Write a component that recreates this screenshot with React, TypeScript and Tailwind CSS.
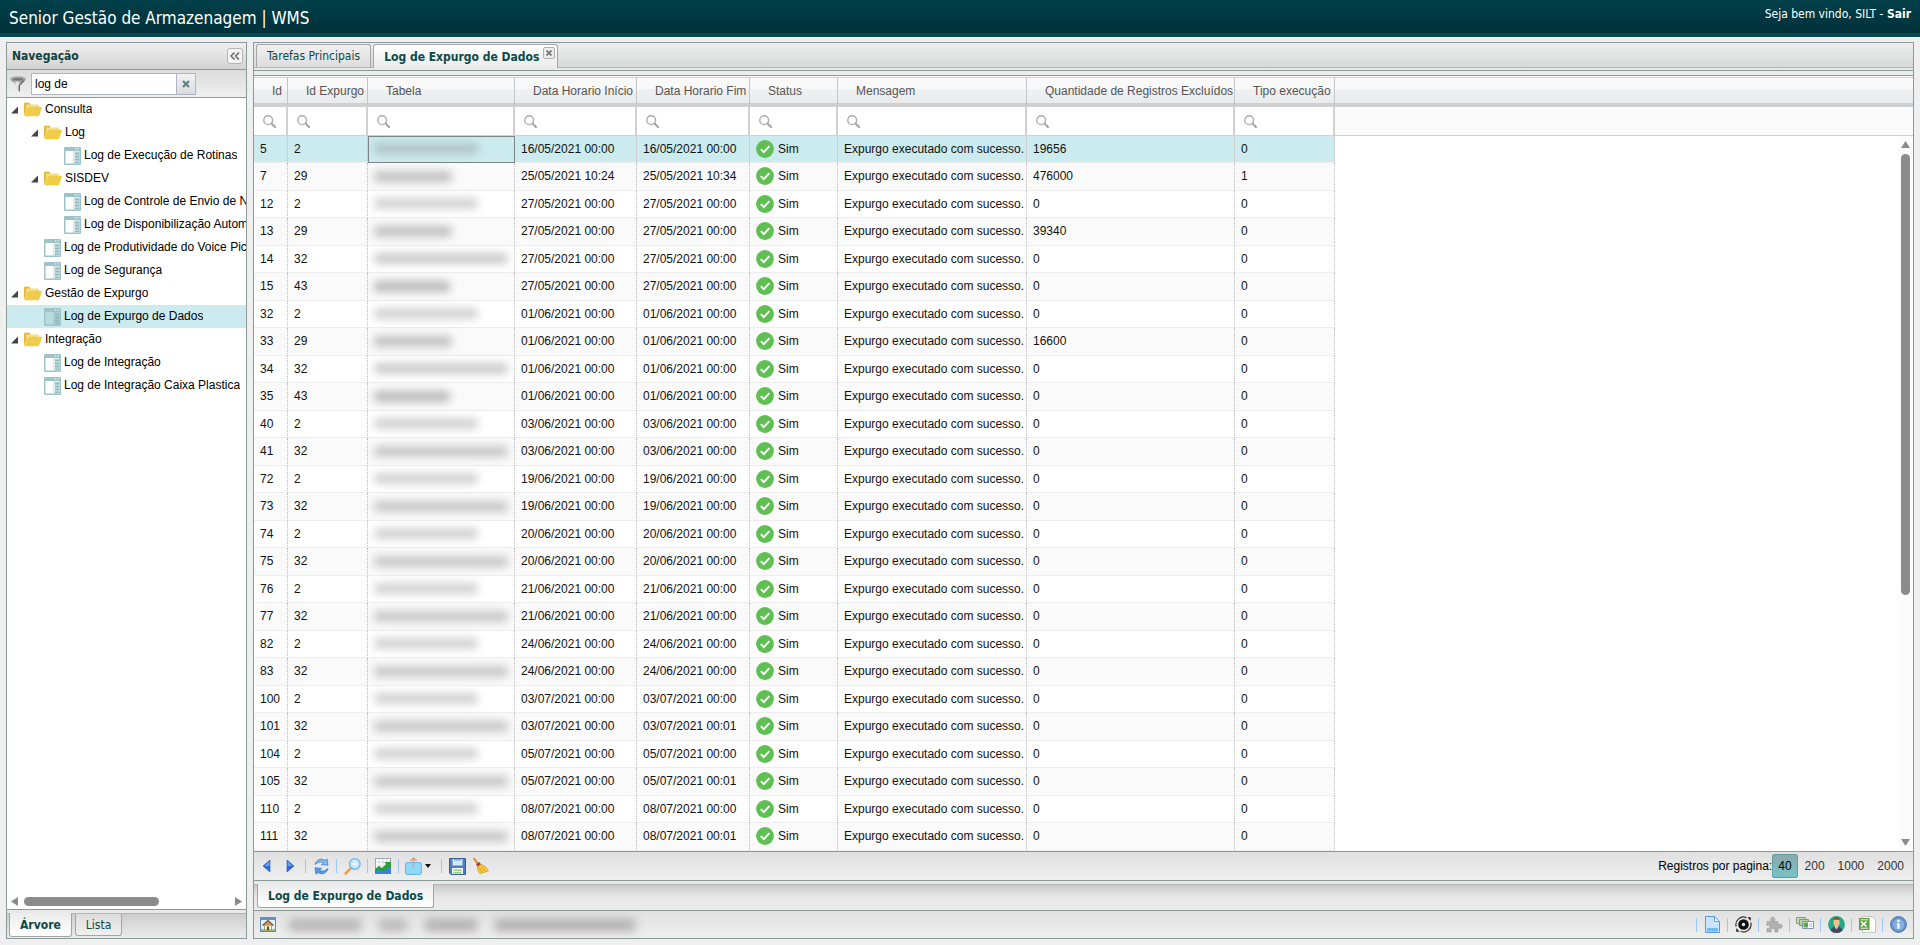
import { useState } from 'react';
import type { ReactNode } from 'react';

type TreeNode = { label: string; level: number; folder?: boolean };

const tree: TreeNode[] = [
  { label: 'Consulta', level: 0, folder: true },
  { label: 'Log', level: 1, folder: true },
  { label: 'Log de Execução de Rotinas', level: 2 },
  { label: 'SISDEV', level: 1, folder: true },
  { label: 'Log de Controle de Envio de Notas', level: 2 },
  { label: 'Log de Disponibilização Automática', level: 2 },
  { label: 'Log de Produtividade do Voice Picking', level: 1 },
  { label: 'Log de Segurança', level: 1 },
  { label: 'Gestão de Expurgo', level: 0, folder: true },
  { label: 'Log de Expurgo de Dados', level: 1 },
  { label: 'Integração', level: 0, folder: true },
  { label: 'Log de Integração', level: 1 },
  { label: 'Log de Integração Caixa Plastica', level: 1 },
];

const indent = ['pl-[3px]', 'pl-[23px]', 'pl-[43px]'];

const columns = [
  { label: 'Id', width: 'w-[34px]' },
  { label: 'Id Expurgo', width: 'w-[80px]' },
  { label: 'Tabela', width: 'w-[147px]' },
  { label: 'Data Horario Início', width: 'w-[122px]' },
  { label: 'Data Horario Fim', width: 'w-[113px]' },
  { label: 'Status', width: 'w-[88px]' },
  { label: 'Mensagem', width: 'w-[189px]' },
  { label: 'Quantidade de Registros Excluídos', width: 'w-[208px]' },
  { label: 'Tipo execução', width: 'w-[100px]' },
];

// id, id expurgo, início, fim, quantidade, tipo
const rows: [number, number, string, string, number, number][] = [
  [5, 2, '16/05/2021 00:00', '16/05/2021 00:00', 19656, 0],
  [7, 29, '25/05/2021 10:24', '25/05/2021 10:34', 476000, 1],
  [12, 2, '27/05/2021 00:00', '27/05/2021 00:00', 0, 0],
  [13, 29, '27/05/2021 00:00', '27/05/2021 00:00', 39340, 0],
  [14, 32, '27/05/2021 00:00', '27/05/2021 00:00', 0, 0],
  [15, 43, '27/05/2021 00:00', '27/05/2021 00:00', 0, 0],
  [32, 2, '01/06/2021 00:00', '01/06/2021 00:00', 0, 0],
  [33, 29, '01/06/2021 00:00', '01/06/2021 00:00', 16600, 0],
  [34, 32, '01/06/2021 00:00', '01/06/2021 00:00', 0, 0],
  [35, 43, '01/06/2021 00:00', '01/06/2021 00:00', 0, 0],
  [40, 2, '03/06/2021 00:00', '03/06/2021 00:00', 0, 0],
  [41, 32, '03/06/2021 00:00', '03/06/2021 00:00', 0, 0],
  [72, 2, '19/06/2021 00:00', '19/06/2021 00:00', 0, 0],
  [73, 32, '19/06/2021 00:00', '19/06/2021 00:00', 0, 0],
  [74, 2, '20/06/2021 00:00', '20/06/2021 00:00', 0, 0],
  [75, 32, '20/06/2021 00:00', '20/06/2021 00:00', 0, 0],
  [76, 2, '21/06/2021 00:00', '21/06/2021 00:00', 0, 0],
  [77, 32, '21/06/2021 00:00', '21/06/2021 00:00', 0, 0],
  [82, 2, '24/06/2021 00:00', '24/06/2021 00:00', 0, 0],
  [83, 32, '24/06/2021 00:00', '24/06/2021 00:00', 0, 0],
  [100, 2, '03/07/2021 00:00', '03/07/2021 00:00', 0, 0],
  [101, 32, '03/07/2021 00:00', '03/07/2021 00:01', 0, 0],
  [104, 2, '05/07/2021 00:00', '05/07/2021 00:00', 0, 0],
  [105, 32, '05/07/2021 00:00', '05/07/2021 00:01', 0, 0],
  [110, 2, '08/07/2021 00:00', '08/07/2021 00:00', 0, 0],
  [111, 32, '08/07/2021 00:00', '08/07/2021 00:01', 0, 0],
];

const pageSizes = [40, 200, 1000, 2000];

// Masked table names, one length per expurgo
const maskWidth: Record<number, string> = {
  2: 'w-[104px] bg-[#7d7d7d]/35',
  29: 'w-[78px] bg-[#6d6d6d]/40',
  32: 'w-[134px] bg-[#7d7d7d]/40',
  43: 'w-[76px] bg-[#6d6d6d]/45',
};

const FolderIcon = () => (
  <svg width="18" height="15" viewBox="0 0 18 15" className="shrink-0">
    <path d="M0 1.6Q0 .8 1 .8h4.4l1.4 1.6H14q.8 0 .8.8V6L4 12 0 13.6Z" fill="#f3df8c" />
    <path d="M0 1.6Q0 .8 1 .8h4.4l1.4 1.600H2.200V8L0 13.400Z" fill="#e5b93a" />
    <path d="M3.800 5.600q.3-.8 1.200-.8h12.300q.9 0 .6.900l-2.600 7.600q-.3.900-1.300.9H.6Z" fill="#f0cd48" />
  </svg>
);

const FormIcon = ({ faded }: { faded?: boolean }) => (
  <svg width="17" height="18" viewBox="0 0 17 18" className="shrink-0">
    <rect width="17" height="18" rx="1" fill="#9fc4c7" />
    <rect x="1.5" y="4" width="7.5" height="12.5" fill={faded ? '#b9dcdf' : '#fff'} />
    <rect x="9" y="4" width="6.5" height="12.5" fill={faded ? '#a9cfd2' : '#dcebec'} />
    <path d="M11 5.5h4v2h-4zM11 8.5h4v2h-4zM11 11.5h4v2h-4zM11 14.5h4v1.5h-4z" fill="#8fb9bd" />
    <path d="M11 1.2h1.2v1.3H11zM13.6 1.2h1.2v1.3h-1.2z" fill="#e6f3f4" />
  </svg>
);

const FunnelIcon = () => (
  <svg width="16" height="16" viewBox="0 0 16 16">
    <defs>
      <linearGradient id="funnel" x1="0" x2="1">
        <stop offset="0" stopColor="#6b6b6b" />
        <stop offset=".45" stopColor="#f2f2f2" />
        <stop offset="1" stopColor="#5a5a5a" />
      </linearGradient>
    </defs>
    <path d="M.6 3.2 6 9.4V14l4 1.6V9.4l5.4-6.2Z" fill="url(#funnel)" />
    <path d="M10 9.4v6.2L8.600 15V9.400l4-5h2.400Z" fill="#666" />
    <ellipse cx="8" cy="3" rx="7.5" ry="2.2" fill="#b4b4b4" stroke="#858585" strokeWidth=".6" />
    <ellipse cx="8" cy="3.3" rx="5.5" ry="1.2" fill="#777" />
  </svg>
);

const SearchIcon = () => (
  <svg width="13" height="13" viewBox="0 0 13 13" fill="none" className="shrink-0">
    <circle cx="5.2" cy="5.2" r="4.4" stroke="#acacac" strokeWidth="1.4" />
    <path d="m8.6 8.6 3.4 3.4" stroke="#a0a0a0" strokeWidth="2" strokeLinecap="round" />
  </svg>
);

const CheckIcon = () => (
  <svg width="18" height="18" viewBox="0 0 18 18" fill="none" className="shrink-0">
    <circle cx="9" cy="9" r="8.9" fill="#5fbf52" />
    <path d="m4.8 9.2 3 3 5.6-6" stroke="#fff" strokeWidth="1.9" />
  </svg>
);

const ArrowIcon = ({ right }: { right?: boolean }) => (
  <svg width="9" height="12" viewBox="0 0 9 12">
    <path d={right ? 'M1 0v12l7-6z' : 'M8 0v12L1 6z'} fill="#2f6bd6" stroke="#2458b8" strokeWidth=".6" />
    <path d={right ? 'M1.6 1.6V6h5z' : 'M7.4 1.6V6h-5z'} fill="#6ba2f0" />
  </svg>
);

const RefreshIcon = () => (
  <svg width="17" height="17" viewBox="0 0 17 17">
    <path d="M2 6.500C3 2 8.200-.5 12 2.600L14 .800l1 6.400-6.600-.6 2-1.700C8.200 3.200 5.400 3.800 2 6.500Z" fill="#7dbdf5" stroke="#3a7fd0" strokeWidth=".8" />
    <path d="M15 10.500c-1 4.500-6.200 7-10 3.900l-2 1.800-1-6.400 6.600.6-2 1.700c2.200 1.700 5 1.100 8.400-1.600Z" fill="#559be6" stroke="#3a7fd0" strokeWidth=".8" />
  </svg>
);

const ZoomIcon = () => (
  <svg width="17" height="17" viewBox="0 0 17 17">
    <path d="m6.4 10.6-4.600 4.800" stroke="#e8a444" strokeWidth="2.8" strokeLinecap="round" />
    <circle cx="10.8" cy="6" r="5.3" fill="#bfe6fb" stroke="#6db6ea" strokeWidth="1.3" />
    <path d="M10.8 3v6M7.800 6h6" stroke="#e9f8ff" strokeWidth="1.4" />
  </svg>
);

const ChartIcon = () => (
  <svg width="16" height="16" viewBox="0 0 16 16">
    <rect x=".5" y=".5" width="15" height="15" fill="#fff" stroke="#9aa6b4" />
    <path d="M4 1v9M8 1v6M12 1v4M1 4h14M1 8h8" stroke="#c8d0d8" strokeWidth=".8" />
    <path d="M0 12.500 4 9l3 2.500L16 6v10H0Z" fill="#3f7fdc" />
    <path d="m0 11 4-3 3 2 4-4-1.500-2H16v6l-1.700-1.600L7.500 14 4 11.500l-4 3Z" fill="#25a332" />
  </svg>
);

const ShareIcon = () => (
  <svg width="17" height="18" viewBox="0 0 17 18" fill="none">
    <rect x=".6" y="5.6" width="15.8" height="11.8" rx="1.5" fill="#8fd9fb" stroke="#62b4e0" />
    <path d="M8.5 10.500v-9M5.300 4l3.200-3 3.200 3" stroke="#e39a86" strokeWidth="1.5" />
  </svg>
);

const SaveIcon = () => (
  <svg width="17" height="17" viewBox="0 0 17 17">
    <path d="M.5.500h16v16H2L.5 15Z" fill="#4f7dc0" stroke="#355f9f" />
    <path d="M3.500 1h10v6.500h-10z" fill="#d9e6f7" />
    <path d="M5 1h7v1.600H5z" fill="#85a9dc" />
    <path d="M3 10h11v6H3z" fill="#eef5ea" />
    <path d="M4.500 11.500h8v1.400h-8zM4.500 14h8v1.400h-8z" fill="#9ecb86" />
  </svg>
);

const BroomIcon = () => (
  <svg width="16" height="16" viewBox="0 0 16 16">
    <path d="M1.200.800 5 6" stroke="#c98a2c" strokeWidth="1.8" strokeLinecap="round" />
    <path d="m3 6 3.500-2L8 6.500 4.500 9Z" fill="#c0392b" />
    <path d="M4.500 9 8.200 6.300q5.300 1.700 7.300 6.700l-8.500 2.600Q4 13 4.500 9Z" fill="#f3c93b" stroke="#c9952a" strokeWidth=".6" />
    <path d="m6.500 9.800 2.500 5M9 8.800l3.400 5" stroke="#c9952a" strokeWidth=".7" />
  </svg>
);

const HomeIcon = () => (
  <svg width="16" height="15" viewBox="0 0 16 15">
    <rect x=".5" y=".5" width="15" height="14" fill="#e9f1fb" stroke="#5d86c0" />
    <path d="M0 0h16v3H0z" fill="#5d8fd4" />
    <path d="M1 12h14v2H1z" fill="#9cc46c" />
    <path d="M4.500 8h7v5h-7z" fill="#f3ead8" stroke="#8b6b48" strokeWidth=".6" />
    <path d="m2.500 8.500 5.500-5 5.500 5" fill="#c79a5e" stroke="#77522e" strokeWidth="1.2" />
    <path d="M7 9.500h2V13H7z" fill="#5a4a3c" />
  </svg>
);

const PageIcon = () => (
  <svg width="17" height="17" viewBox="0 0 17 17">
    <path d="M1.500.500h9l5 5v11h-14z" fill="#c9e4fd" stroke="#5f97de" />
    <path d="M10.500.500v5h5z" fill="#fff" stroke="#6a9fe0" />
    <path d="M3 12h11v3.500H3z" fill="#6cbcf7" />
  </svg>
);

const GearIcon = () => (
  <svg width="17" height="17" viewBox="0 0 17 17" fill="none">
    <circle cx="8.500" cy="8.500" r="3.500" stroke="#111" strokeWidth="3.600" />
    <path d="M1.200 10.500A7.500 7.500 0 0 1 11.500 1.700M15.800 6.500A7.500 7.500 0 0 1 5.500 15.300" stroke="#333" strokeWidth="1.2" />
    <path d="m12.500 1 3.500.500-.500 3.500ZM4.500 16 1 15.500l.5-3.500Z" fill="#222" />
  </svg>
);

const PuzzleIcon = () => (
  <svg width="17" height="17" viewBox="0 0 17 17">
    <path d="M1 5.500h4.300C4 3.500 4.800 1.200 6.800 1.200s2.800 2.300 1.500 4.300H12v3.300c2-1.300 4.300-.6 4.300 1.400S14 13 12 11.800V16H8.600c.8-2 .2-3.400-1.600-3.400S4.500 14 5.400 16H1v-3.600c1.700.6 3 .1 3-1.400s-1.300-2-3-1.400Z" fill="#b0b0b0" stroke="#999" strokeWidth=".6" />
  </svg>
);

const WindowsIcon = () => (
  <svg width="18" height="12" viewBox="0 0 18 12" className="-mt-1">
    <path d="M.5.500h9v6h-9z" fill="#c9d8bd" stroke="#8a9a8a" />
    <path d="M3.500 2.500h9v6h-9z" fill="#b5d3a5" stroke="#7e9480" />
    <path d="M6.500 4.500h11v7h-11z" fill="#fff" stroke="#7c93a8" />
    <path d="M7.500 5.500H12v5H7.500z" fill="#57a84a" />
    <path d="M13 6h3.500v4H13z" fill="#cfe0f0" />
  </svg>
);

const UserIcon = () => (
  <svg width="17" height="17" viewBox="0 0 17 17">
    <circle cx="8.5" cy="8.5" r="8.4" fill="#25a986" />
    <path d="M2.500 14.400q1-3.600 6-3.900 5 .300 6 3.900a8.400 8.400 0 0 1-12 0Z" fill="#3e4a66" />
    <path d="M5.500 3.500h6V8l-1.400 2v1.500l-1.600 2-1.600-2V10L5.500 8Z" fill="#f3c08c" />
    <path d="M5.200 4.500q0-3.200 3.300-3.200t3.300 3.200l-1.300-.900h-4Z" fill="#7a4a2b" />
  </svg>
);

const ExcelIcon = () => (
  <svg width="17" height="17" viewBox="0 0 17 17">
    <path d="M3.500.500H13l3.500 3.500v12.500h-13z" fill="#fbfcfa" stroke="#c4c9bf" />
    <path d="M0 2h10.500v12H0z" fill="#5f9e45" />
    <path d="M1.500 3.800H9M1.500 12.200H9" stroke="#e8f4e0" />
    <path d="M2 5.500 7.500 10.500M7.500 5.500 2 10.500" stroke="#fff" strokeWidth="1.6" />
  </svg>
);

const InfoIcon = () => (
  <svg width="17" height="17" viewBox="0 0 17 17">
    <circle cx="8.5" cy="8.5" r="7.9" fill="#6694cf" stroke="#4a78b5" />
    <circle cx="8.5" cy="8.5" r="5.6" fill="#88aedd" />
    <path d="M7.400 3.800h2.200V6H7.400zM7 7.200h2.600v5.600H7.400V8.400H7z" fill="#fff" />
  </svg>
);

const Separator = () => <span className="h-[14px] w-px shrink-0 bg-[#9cc8f5]" />;

const IconButton = ({ label, children }: { label: string; children: ReactNode }) => (
  <button type="button" aria-label={label} className="flex h-5 w-[18px] shrink-0 items-center justify-center">
    {children}
  </button>
);

const statusTools = [
  { label: 'Documento', icon: <PageIcon /> },
  { label: 'Processos', icon: <GearIcon /> },
  { label: 'Extensões', icon: <PuzzleIcon /> },
  { label: 'Janelas', icon: <WindowsIcon /> },
  { label: 'Usuário', icon: <UserIcon /> },
  { label: 'Exportar Excel', icon: <ExcelIcon /> },
  { label: 'Informações', icon: <InfoIcon /> },
];

function Navigation() {
  const [filter, setFilter] = useState('log de');
  const [selected, setSelected] = useState('Log de Expurgo de Dados');

  return (
    <aside className="flex w-[241px] shrink-0 flex-col border border-[#8a9a99] bg-white">
      <div className="flex h-[27px] shrink-0 items-center justify-between border-b border-[#8a9a99] bg-linear-to-b from-[#f0f0f0] to-[#d3d3d3] pr-[3px] pl-[5px]">
        <h2 className="font-['DejaVu_Sans_Condensed','DejaVu_Sans',sans-serif] text-xs font-bold text-[#0f4040]">Navegação</h2>
        <button type="button" aria-label="Recolher" className="flex size-4 items-center justify-center rounded-[3px] border border-[#b5b5b5] bg-[#f4f4f4]">
          <svg width="10" height="8" viewBox="0 0 10 8" fill="none" stroke="#666" strokeWidth="1.5">
            <path d="M4.500.500 1 4l3.500 3.500M9 .500 5.500 4 9 7.500" />
          </svg>
        </button>
      </div>

      <div className="flex h-[28px] shrink-0 items-center border-b border-[#8a9a99] bg-linear-to-b from-[#dcdcdc] to-[#efefef] pl-[3px]">
        <FunnelIcon />
        <input
          type="text"
          aria-label="Filtrar menu"
          value={filter}
          onChange={(e) => setFilter(e.target.value)}
          className="ml-[5px] h-[22px] w-[146px] border border-[#b0b5c5] bg-white px-[3px] text-xs outline-none"
        />
        <button
          type="button"
          aria-label="Limpar filtro"
          onClick={() => setFilter('')}
          className="flex h-[22px] w-[19px] items-center justify-center border border-l-0 border-[#b0b5c5] bg-linear-to-b from-[#f3f3f3] to-[#d9dcdf]"
        >
          <svg width="8" height="8" viewBox="0 0 8 8" stroke="#5f8285" strokeWidth="2.2">
            <path d="m1 1 6 6M7 1 1 7" />
          </svg>
        </button>
      </div>

      <ul className="min-h-0 flex-1 overflow-hidden">
        {tree.map((node) => (
          <li key={node.label} className={selected === node.label ? 'bg-[#cbebee]' : ''}>
            <button
              type="button"
              onClick={() => setSelected(node.label)}
              className={`flex h-[23px] w-full items-center text-left text-xs ${indent[node.level]}`}
            >
              {node.folder ? (
                <>
                  <svg width="14" height="8" viewBox="0 0 14 8" className="shrink-0">
                    <path d="M1 7.500 8 .500v7z" fill="#444" />
                  </svg>
                  <FolderIcon />
                </>
              ) : (
                <>
                  <span className="w-[14px] shrink-0" />
                  <FormIcon faded={selected === node.label} />
                </>
              )}
              <span className="ml-[3px] min-w-0 overflow-hidden pb-px whitespace-nowrap">{node.label}</span>
            </button>
          </li>
        ))}
      </ul>

      <div className="flex h-4 shrink-0 items-center gap-[6px] px-1">
        <svg width="7" height="9" viewBox="0 0 7 9"><path d="M7 0v9L0 4.500z" fill="#8b8b8b" /></svg>
        <div className="flex-1">
          <div className="h-[9px] w-[66%] rounded-full bg-[#8b8b8b]" />
        </div>
        <svg width="7" height="9" viewBox="0 0 7 9"><path d="M0 0v9l7-4.500z" fill="#8b8b8b" /></svg>
      </div>

      <div className="shrink-0 border-t border-[#8a9a99] bg-[#e9e9e9] pt-[3px]">
        <div className="flex h-[25px] items-start gap-[3px] border-t border-[#b5b5b5] bg-linear-to-b from-[#cdcdcd] to-[#ececec] px-[2px] font-['DejaVu_Sans_Condensed','DejaVu_Sans',sans-serif] text-xs text-[#0b4a47]">
          <button type="button" className="-mt-px h-6 rounded-b-[3px] border border-t-0 border-[#a5a5a5] bg-linear-to-b from-[#ececec] to-white px-[10px] font-bold">Árvore</button>
          <button type="button" className="h-[22px] rounded-b-[3px] border border-t-0 border-[#a5a5a5] bg-linear-to-b from-[#dcdcdc] to-[#f0f0f0] px-[10px]">Lista</button>
        </div>
      </div>
    </aside>
  );
}

function LogGrid() {
  return (
    <div className="relative min-h-0 flex-1 overflow-hidden bg-white">
      <table className="w-full table-fixed border-separate border-spacing-0 text-left text-xs">
        <colgroup>
          {columns.map((c) => (
            <col key={c.label} className={c.width} />
          ))}
          <col />
        </colgroup>
        <thead>
          <tr className="h-[30px] bg-[linear-gradient(#f9f9f9_0%,#f9f9f9_40%,#f0f1f3_41%,#e7e8ea_100%)]">
            {columns.map((c) => (
              <th key={c.label} scope="col" className="border-t border-r border-b-4 border-t-[#d0d0d0] border-r-[#c5c5c5] border-b-[#cfcfcf] p-0 pl-[18px] font-normal whitespace-nowrap text-[#555]">
                {c.label}
              </th>
            ))}
            <td className="border-t border-b-4 border-t-[#d0d0d0] border-b-[#cfcfcf]" />
          </tr>
          <tr className="h-[29px] bg-[#fafafa]">
            {columns.map((c) => (
              <td key={c.label} className="border-r-2 border-b border-[#d0d0d0] bg-white p-0">
                <label className="flex items-center gap-1 pl-[9px]">
                  <SearchIcon />
                  <input type="text" aria-label={`Filtrar ${c.label}`} className="h-5 w-full min-w-0 outline-none" />
                </label>
              </td>
            ))}
            <td className="border-b border-[#d0d0d0]" />
          </tr>
        </thead>
        <tbody className="text-[#111]">
          {rows.map(([id, expurgo, start, end, count, kind], i) => {
            const cell = `border-r border-b border-r-[#bcbcbc] border-b-[#ededed] [border-right-style:dotted] p-0 pb-px pl-[6px] whitespace-nowrap ${
              i === 0 ? 'bg-[#cbebee]' : i % 2 ? 'bg-[#fafafa]' : 'bg-white'
            }`;
            return (
              <tr key={id} className="odd:h-[27px] even:h-7">
                <td className={cell}>{id}</td>
                <td className={cell}>{expurgo}</td>
                <td className={`${cell} ${i === 0 ? 'outline outline-offset-[-1px] outline-[#7c8686]' : ''}`}>
                  <div className={`h-[11px] rounded-sm blur-[4px] ${maskWidth[expurgo]}`} />
                </td>
                <td className={cell}>{start}</td>
                <td className={cell}>{end}</td>
                <td className={cell}>
                  <div className="flex items-center gap-1">
                    <CheckIcon />
                    Sim
                  </div>
                </td>
                <td className={cell}>Expurgo executado com sucesso.</td>
                <td className={cell}>{count}</td>
                <td className={cell}>{kind}</td>
                <td />
              </tr>
            );
          })}
        </tbody>
      </table>

      {/* Scrollbar */}
      <div className="absolute top-[59px] right-0 bottom-0 flex w-[15px] flex-col items-center gap-[6px] bg-[#fcfcfc] py-[5px]">
        <svg width="9" height="7" viewBox="0 0 9 7" className="shrink-0"><path d="M4.500 0 9 7H0z" fill="#8b8b8b" /></svg>
        <div className="w-[9px] flex-1">
          <div className="h-[65%] rounded-full bg-[#8b8b8b]" />
        </div>
        <svg width="9" height="7" viewBox="0 0 9 7" className="shrink-0"><path d="M0 0h9L4.500 7z" fill="#8b8b8b" /></svg>
      </div>
    </div>
  );
}

function PagingBar() {
  const [size, setSize] = useState(40);

  return (
    <div className="flex h-[29px] shrink-0 items-center justify-between border-t border-[#8a9a99] bg-linear-to-b from-[#e0e0e0] to-[#eeeeee] px-[3px] text-xs">
      <div className="flex items-center gap-[6px]">
        <IconButton label="Anterior"><ArrowIcon /></IconButton>
        <IconButton label="Próxima"><ArrowIcon right /></IconButton>
        <Separator />
        <IconButton label="Atualizar"><RefreshIcon /></IconButton>
        <Separator />
        <IconButton label="Pesquisar"><ZoomIcon /></IconButton>
        <Separator />
        <IconButton label="Gráfico"><ChartIcon /></IconButton>
        <Separator />
        <button type="button" aria-label="Exportar" className="flex items-center gap-[3px] pr-1">
          <ShareIcon />
          <svg width="6" height="4" viewBox="0 0 6 4"><path d="M0 0h6L3 4z" fill="#111" /></svg>
        </button>
        <Separator />
        <IconButton label="Salvar"><SaveIcon /></IconButton>
        <IconButton label="Limpar"><BroomIcon /></IconButton>
      </div>
      <div className="flex items-center">
        <span>Registros por pagina:</span>
        {pageSizes.map((n) => (
          <button
            key={n}
            type="button"
            onClick={() => setSize(n)}
            className={`h-6 rounded-[2px] border px-[5px] ${
              n === size ? 'border-[#5f9ea0] bg-linear-to-b from-[#8aa9a9] to-[#74c2c8] text-black' : 'ml-px border-transparent text-[#333]'
            }`}
          >
            {n}
          </button>
        ))}
      </div>
    </div>
  );
}

export default function App() {
  return (
    <div className="flex h-screen flex-col overflow-hidden bg-[#efefef] font-['Liberation_Sans',Arial,sans-serif] text-black">
      <header className="flex h-[37px] shrink-0 justify-between border-b-4 border-[#07494e] bg-linear-to-b from-[#00404a] to-[#00313a] px-[9px] font-['DejaVu_Sans_Condensed','DejaVu_Sans',sans-serif] text-white">
        <h1 className="text-[17px] leading-9">Senior Gestão de Armazenagem | WMS</h1>
        <p className="text-xs leading-7">
          Seja bem vindo, SILT - <a href="#sair" className="font-bold">Sair</a>
        </p>
      </header>

      <div className="flex min-h-0 flex-1 gap-[6px] pt-[5px] pr-[6px] pb-[6px] pl-[6px]">
        <Navigation />

        <main className="flex min-w-0 flex-1 flex-col border border-[#8a9a99] bg-[#e9e9e9]">
          <div className="flex h-[25px] shrink-0 items-end gap-[2px] border-b border-[#b5b5b5] bg-linear-to-b from-[#ececec] to-[#d8dad9] pl-[2px] font-['DejaVu_Sans_Condensed','DejaVu_Sans',sans-serif] text-xs text-[#0b4a47]">
            <button type="button" className="h-[23px] rounded-t-[3px] border border-b-0 border-[#a5a5a5] bg-linear-to-b from-[#f0f0f0] to-[#dddddd] px-[10px]">Tarefas Principais</button>
            <div className="-mb-px flex h-6 items-start rounded-t-[3px] border border-b-0 border-[#a5a5a5] bg-linear-to-b from-white to-[#ebebeb] pr-[2px] pl-[10px]">
              <button type="button" className="h-[23px] font-bold">Log de Expurgo de Dados</button>
              <button type="button" aria-label="Fechar" className="mt-[2px] ml-1 flex size-3 items-center justify-center rounded-[2px] border border-[#b0b0b0] bg-[#ececec]">
                <svg width="6" height="6" viewBox="0 0 6 6" stroke="#777" strokeWidth="1.8"><path d="m.500.500 5 5M5.500.500l-5 5" /></svg>
              </button>
            </div>
          </div>
          <div className="mt-[2px] h-[6px] shrink-0 border-y border-[#8a9a99] bg-[#ececec]" />
          <div className="h-px shrink-0 bg-white" />

          <LogGrid />
          <PagingBar />

          <div className="shrink-0 border-t border-[#8a9a99] pt-[3px]">
            <div className="flex h-[26px] items-start border-t border-[#b5b5b5] bg-linear-to-b from-[#cacaca] via-[#e8e8e8] to-[#ececec] pl-[3px]">
              <button type="button" className="-mt-px h-6 rounded-b-[3px] border border-t-0 border-[#a5a5a5] bg-linear-to-b from-[#ececec] to-white px-[10px] font-['DejaVu_Sans_Condensed','DejaVu_Sans',sans-serif] text-xs font-bold text-[#0b4a47]">
                Log de Expurgo de Dados
              </button>
            </div>
          </div>

          <footer className="flex h-[28px] shrink-0 items-center justify-between border-t border-[#8a9a99] bg-linear-to-b from-[#e1e1e1] to-[#eeeeee] pr-[6px] pl-[5px]">
            <div className="flex items-center">
              <IconButton label="Início"><HomeIcon /></IconButton>
              <div className="ml-3 flex gap-[18px] blur-[5px]">
                <span className="h-[12px] w-[72px] bg-[#b4b4b4]" />
                <span className="h-[12px] w-[28px] bg-[#b8b8b8]" />
                <span className="h-[12px] w-[52px] bg-[#b0b0b0]" />
                <span className="h-[12px] w-[140px] bg-[#b0b0b0]" />
              </div>
            </div>
            <div className="flex items-center gap-[6px]">
              {statusTools.map((tool) => (
                <div key={tool.label} className="flex items-center gap-[6px]">
                  <Separator />
                  <IconButton label={tool.label}>{tool.icon}</IconButton>
                </div>
              ))}
            </div>
          </footer>
        </main>
      </div>
    </div>
  );
}
